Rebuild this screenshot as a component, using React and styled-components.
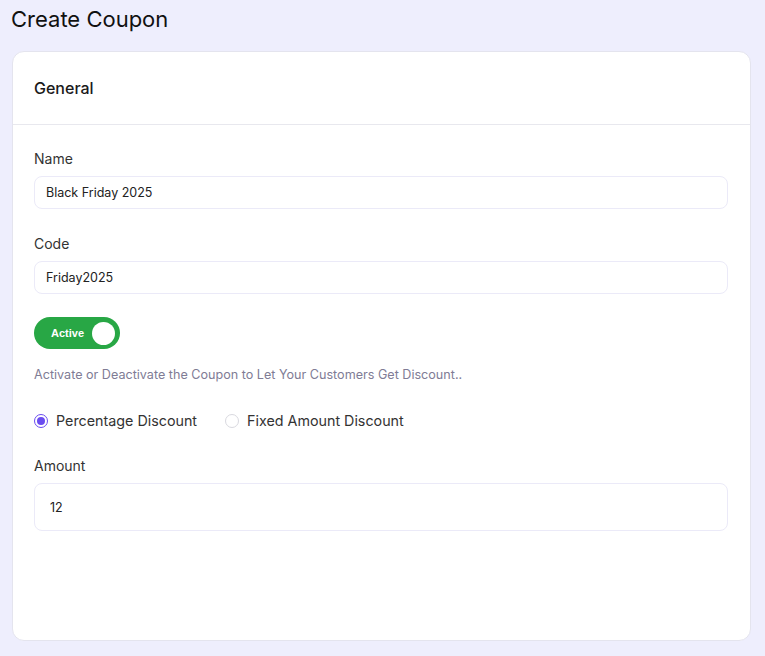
import styled, { createGlobalStyle } from "styled-components"

const GlobalStyle = createGlobalStyle`
  html, body {
    margin: 0;
    padding: 0;
    background-color: #eeeefd;
    font-family: Inter, "Noto Sans", sans-serif;
  }
`

export default function App() {
  return (
    <>
      <GlobalStyle />
      <PageStyled>
        <h1 className="page-title">Create Coupon</h1>

        <Card>
          <CardHeader>General</CardHeader>
          <CardBody>
            <Field>
              <Label>Name</Label>
              <Input defaultValue="Black Friday 2025" />
            </Field>

            <Field>
              <Label>Code</Label>
              <Input defaultValue="Friday2025" />
            </Field>

            <Toggle>
              <span className="text">Active</span>
              <span className="knob" />
            </Toggle>

            <Hint>Activate or Deactivate the Coupon to Let Your Customers Get Discount..</Hint>

            <RadioRow>
              <Radio>
                <RadioDot $checked />
                Percentage Discount
              </Radio>
              <Radio>
                <RadioDot />
                Fixed Amount Discount
              </Radio>
            </RadioRow>

            <Field>
              <Label>Amount</Label>
              <Input defaultValue="12" $tall />
            </Field>
          </CardBody>
        </Card>
      </PageStyled>
    </>
  )
}

const PageStyled = styled.div`
  padding: 4px 14px 15px 12px;
  box-sizing: border-box;
  height: 656px;
  display: flex;
  flex-direction: column;

  .page-title {
    margin: 0 0 17px -1px;
    font-size: 22px;
    font-weight: 400;
    line-height: 30px;
    color: #111;
  }
`

const Card = styled.div`
  flex: 1;
  background-color: #ffffff;
  border: 1px solid #e4e4ee;
  border-radius: 12px;
  display: flex;
  flex-direction: column;
`

const CardHeader = styled.div`
  height: 72px;
  padding: 0 21px;
  display: flex;
  align-items: center;
  font-size: 16px;
  font-weight: 500;
  color: #1a1a1a;
  border-bottom: 1px solid #e8e8ee;
`

const CardBody = styled.div`
  padding: 24px 22px 0 21px;
  display: flex;
  flex-direction: column;
`

const Field = styled.div`
  display: flex;
  flex-direction: column;
  margin-bottom: 25px;
`

const Label = styled.label`
  font-size: 14px;
  color: #333;
  line-height: 20px;
  margin-bottom: 7px;
`

const Input = styled.input`
  box-sizing: border-box;
  width: 100%;
  height: ${(p) => (p.$tall ? "48px" : "33px")};
  padding: 0 ${(p) => (p.$tall ? "15px" : "11px")};
  border: 1px solid #ebeaf8;
  border-radius: 8px;
  font-family: Inter, "Noto Sans", sans-serif;
  font-size: 12.5px;
  color: #222;
  outline: none;
  background: #fff;
`

const Toggle = styled.div`
  width: 86px;
  height: 32px;
  border-radius: 16px;
  background-color: #28a745;
  display: flex;
  align-items: center;
  justify-content: space-between;
  padding: 0 5px 0 17px;
  box-sizing: border-box;
  margin-top: -2px;

  .text {
    color: #fff;
    font-family: "Liberation Sans", Arial, sans-serif;
    font-weight: 700;
    font-size: 11px;
  }

  .knob {
    width: 23px;
    height: 23px;
    border-radius: 50%;
    background-color: #fff;
  }
`

const Hint = styled.p`
  margin: 17px 0 27px 0;
  font-size: 12.6px;
  color: #807c95;
  line-height: 18px;
`

const RadioRow = styled.div`
  display: flex;
  gap: 28px;
  margin-bottom: 25px;
`

const Radio = styled.label`
  display: flex;
  align-items: center;
  gap: 8px;
  font-size: 14.3px;
  color: #333;
  line-height: 20px;
`

const RadioDot = styled.span`
  box-sizing: border-box;
  width: 14px;
  height: 14px;
  border-radius: 50%;
  border: 1px solid ${(p) => (p.$checked ? "#6a4cf0" : "#d9d9df")};
  display: grid;
  place-items: center;

  &::after {
    content: "";
    width: 8px;
    height: 8px;
    border-radius: 50%;
    background-color: ${(p) => (p.$checked ? "#6a4cf0" : "transparent")};
  }
`
